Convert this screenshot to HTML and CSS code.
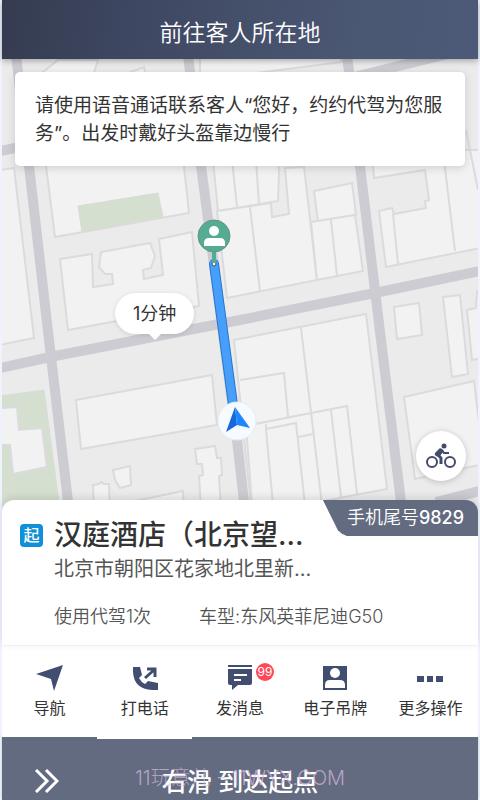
FILE: index.html
```
<!DOCTYPE html>
<html lang="zh-CN">
<head>
    <meta charset="UTF-8">
    <meta name="viewport" content="width=device-width, initial-scale=1.0">
    <title>前往客人所在地</title>
    <link rel="stylesheet" href="styles.css">
</head>
<body>

    <header class="header">
        <h1>前往客人所在地</h1>
    </header>

    <main class="map">
        <svg class="map-bg" viewBox="2 59 476 451" preserveAspectRatio="xMidYMid slice" aria-hidden="true">
            <!-- blocks -->
            <g class="block">
                <path d="M38 76L58 60H98L93 76Z"/>
                <path d="M120 76L144 67L146 76Z"/>
                <path d="M200 55H340L342 62L200 80Z"/>
                <path d="M0 170L14 168L34 338L0 345Z"/>
                <path d="M45 158L55 237L189 213L183 158Z"/>
                <path d="M60 259L92 254L93 287L113 284L112 274L105 274L99 267L101 252L150 243L155 256L151 268L143 270L144 279L163 275L159 239L192 232L199 306L68 330Z"/>
                <path d="M212 150L218 211L278 201L279 175L278 150Z"/>
                <path d="M217 211L271 203L272 217L289 214L285 168L304 167L317 280L227 298Z"/>
                <path d="M314 191L352 183L356 215L318 222Z"/>
                <path d="M311 222L355 215L363 271L317 280Z"/>
                <path d="M372 150L374 178L425 170L429 200L425 201L426 208L394 214L392 208L379 211L386 267L480 248V150Z"/>
                <path d="M394 307L419 303L422 335L397 339Z"/>
                <path d="M443 297L460 295L468 374L452 377Z"/>
                <path d="M482 288L477 291L476 308L467 310L472 360L482 358Z"/>
                <path d="M404 397L474 381L484 464L415 479Z"/>
                <path d="M234 340L366 314L387 489L355 495L252 515Z"/>
                <path d="M76 400L212 375L217 425L81 449Z"/>
                <path d="M113 470L130 466L131 485L120 488L115 480Z"/>
                <path d="M93 485L99 484L101 482L104 484L109 484L110 510H94Z"/>
                <path d="M195 449L215 446L217 458L221 458L222 475L219 476L221 510H201L199 476L203 475L202 464L197 464Z"/>
                <path d="M130 502L183 491L184 510H130Z"/>
            </g>
            <!-- parks -->
            <path class="park" d="M78 206L158 193L163 217L82 232Z"/>
            <path class="park" d="M0 396L44 390L60 510H0Z"/>
            <path class="block" d="M0 408L17 407L19 430L42 428L47 467L13 474L10 445H0Z"/>
            <!-- lot borders -->
            <path class="lot" d="M232 160L237 207M256 160L259 204M250 207L260 291M331 220L337 276M393 214L398 264M444 160L455 251M466 130L478 190M301 328L311 412M240 380L284 373L288 417M255 424L347 406L357 494M266 424V429L296 423L305 505M266 429L273 505M311 412L322 505M331 410L341 497M298 437L313 434M246 426L252 505"/>
            <!-- roads -->
            <g class="road">
                <path d="M16 55L29 166L49 340L69 510"/>
                <path d="M188 55L201 166L237 440L245 510"/>
                <path d="M347 55L360 166L381 340L402 510"/>
                <path d="M0 368L50 357L240 320L375 293L480 271"/>
                <path d="M0 151L40 143M350 78L480 46M436 502L480 491"/>
            </g>
            <!-- route -->
            <path class="route-edge" d="M214 264L234 412"/>
            <path class="route" d="M214 264L234 412"/>
            <!-- pick-up point -->
            <circle cx="214" cy="264" r="2" fill="#fff" stroke="#444c55"/>
            <path d="M214 250V263" stroke="#4fae93" stroke-width="4"/>
            <circle cx="214" cy="236" r="16" fill="#54ad93" stroke="#6b8d83" stroke-width="1"/>
            <circle cx="214" cy="231" r="5" fill="#fff"/>
            <path d="M204 246V243Q204 238 209 238H220Q225 238 225 243V246Z" fill="#fff"/>
            <!-- driver -->
            <circle cx="237" cy="421" r="19" fill="#f7fbff" stroke="#e5edf3"/>
            <path d="M235 407L226 432L237 425Z" fill="#1469dc"/>
            <path d="M235 407L250 428L237 425Z" fill="#1e86ff"/>
        </svg>

        <p class="notice">请使用语音通话联系客人“您好，约约代驾为您服务”。出发时戴好头盔靠边慢行</p>

        <div class="eta">1分钟</div>

        <button class="bike" type="button" aria-label="骑行">
            <svg width="30" height="26" viewBox="0 0 30 26" fill="none" stroke="#424b69">
                <circle cx="6" cy="19" r="5" stroke-width="2"/>
                <circle cx="24" cy="19" r="5" stroke-width="2"/>
                <circle cx="18" cy="3" r="2.5" fill="#424b69" stroke="none"/>
                <path d="M11 11L15 15V21" stroke-width="3" stroke-linejoin="round"/>
                <path d="M15 6L18 10H23" stroke-width="2"/>
                <path d="M14 5L9 10Q8 12 10 13L13 14L18 8Z" fill="#424b69" stroke="none"/>
            </svg>
        </button>
    </main>

    <section class="order">
        <div class="phone-tail">手机尾号<b>9829</b></div>
        <div class="place">
            <span class="start">起</span>
            <h2>汉庭酒店（北京望...</h2>
        </div>
        <p class="address">北京市朝阳区花家地北里新...</p>
        <div class="meta">
            <span>使用代驾1次</span>
            <span>车型:东风英菲尼迪G50</span>
        </div>
    </section>

    <nav class="actions">
        <button type="button">
            <svg width="28" height="28" viewBox="0 0 28 28" fill="#424e70">
                <path d="M27 1L18 27L15 15L0 10Z"/>
            </svg>
            导航
        </button>
        <button type="button" class="active">
            <svg width="28" height="28" viewBox="0 0 28 28">
                <path d="M2 3H9L11 11L8 14Q10 18 14 20L17 17L27 19V26H21Q3 25 2 8Z" fill="#424e70"/>
                <path d="M14 14L23 6M16 5H24V13" fill="none" stroke="#424e70" stroke-width="3"/>
            </svg>
            打电话
        </button>
        <button type="button">
            <svg width="28" height="28" viewBox="0 0 28 28">
                <path d="M2 1H26V3H2ZM2 5H26V19Q26 21 24 21H12L6 26V21H4Q2 21 2 19Z" fill="#424e70"/>
                <path d="M8 11H21M8 16H15" stroke="#fff" stroke-width="2"/>
            </svg>
            发消息
            <span class="badge">99</span>
        </button>
        <button type="button">
            <svg width="28" height="28" viewBox="0 0 28 28">
                <path d="M2 2H26V26H2Z" fill="#424e70"/>
                <circle cx="14" cy="9" r="5" fill="#fff"/>
                <path d="M4 24V21Q4 16 9 16H19Q24 16 24 21V24Z" fill="#fff"/>
            </svg>
            电子吊牌
        </button>
        <button type="button">
            <svg width="28" height="28" viewBox="0 0 28 28" fill="#424e70">
                <path d="M1 12H8V18H1ZM11 12H17V18H11ZM20 12H27V18H20Z"/>
            </svg>
            更多操作
        </button>
    </nav>

    <footer class="slide">
        <button type="button">
            <svg class="arrows" width="24" height="24" viewBox="0 0 24 24" fill="none" stroke="#fff" stroke-width="3">
                <path d="M1 1L12 12L1 23M11 1L22 12L11 23"/>
            </svg>
            右滑 到达起点
        </button>
        <span class="watermark">11玩意儿 - 11WYX.COM</span>
    </footer>

</body>
</html>
```
FILE: styles.css
```
* {
    padding: 0;
    margin: 0;
    box-sizing: border-box;
}

body {
    display: flex;
    flex-direction: column;
    min-height: 100vh;
    padding: 0 2px;
    background-color: #eef3fc;
    color: #333;
    font-family: Inter, "Noto Sans CJK SC", sans-serif;
}

button {
    border: none;
    background: none;
    color: inherit;
    font-family: inherit;
    cursor: pointer;
}

/* Header */
.header {
    position: relative;
    z-index: 2;
    padding: 17px 0 10px;
    background: linear-gradient(100deg, #353c50, #3f4863 30%, #4b5873 75%, #4c5978);
    color: #fff;
    text-align: center;
    box-shadow: 0 2px 6px rgba(0, 0, 0, 0.3);
}

.header h1 {
    font-size: 23px;
    font-weight: 350;
    line-height: 32px;
}

/* Map */
.map {
    position: relative;
    flex: 1;
    min-height: 400px;
    padding: 13px;
    overflow: hidden;
    background-color: #ebebeb;
}

.map-bg {
    position: absolute;
    top: 0;
    left: 0;
    width: 100%;
    height: 100%;
}

.block {
    fill: #f2f2f2;
    stroke: #dbdbdd;
    stroke-width: 2;
}

.park {
    fill: #d5dfcf;
    stroke: #d8dcd5;
}

.lot {
    fill: none;
    stroke: #dbdbdd;
    stroke-width: 2;
}

.road {
    fill: none;
    stroke: #cdccd2;
    stroke-width: 10;
}

.route-edge {
    stroke: #2a77cf;
    stroke-width: 10;
    stroke-linecap: round;
}

.route {
    stroke: #469ffa;
    stroke-width: 8;
    stroke-linecap: round;
}

.notice {
    position: relative;
    padding: 20px 16px 18px 20px;
    border-radius: 5px;
    background-color: #fff;
    font-size: 19px;
    font-weight: 400;
    line-height: 28px;
    box-shadow: 0 2px 8px rgba(0, 0, 0, 0.15);
}

.eta {
    position: absolute;
    top: 234px;
    left: 113px;
    padding: 0 18px;
    border-radius: 21px;
    background-color: #fff;
    font-size: 18px;
    line-height: 41px;
    box-shadow: 0 1px 5px rgba(0, 0, 0, 0.12);
}

.eta::after {
    content: "";
    position: absolute;
    top: 100%;
    left: 50%;
    margin-left: -6px;
    border: 6px solid transparent;
    border-top-color: #fff;
    border-bottom: none;
}

.bike {
    position: absolute;
    right: 12px;
    bottom: 29px;
    display: flex;
    justify-content: center;
    align-items: center;
    width: 50px;
    height: 50px;
    border-radius: 50%;
    background-color: #fff;
    box-shadow: 0 1px 6px rgba(0, 0, 0, 0.2);
}

/* Order card */
.order {
    position: relative;
    margin-top: -10px;
    padding: 16px 18px;
    border-radius: 12px 12px 0 0;
    background-color: #fff;
    box-shadow: 0 -2px 8px rgba(0, 0, 0, 0.12);
}

.phone-tail {
    position: absolute;
    top: 0;
    right: 0;
    padding: 0 14px 0 24px;
    border-radius: 0 12px 0 0;
    background-color: #636b80;
    clip-path: polygon(0 0, 100% 0, 100% 100%, 24px 100%, 19px 94%, 15px 84%);
    color: #fff;
    font-size: 18px;
    font-weight: 350;
    line-height: 36px;
}

.phone-tail b {
    font-weight: 500;
}

.place {
    display: flex;
    align-items: center;
    gap: 11px;
}

.start {
    width: 23px;
    border-radius: 4px;
    background-color: #0f90d8;
    color: #fff;
    font-size: 16px;
    font-weight: 500;
    line-height: 23px;
    text-align: center;
}

.place h2 {
    font-size: 28px;
    font-weight: 500;
    line-height: 38px;
}

.address {
    padding-left: 34px;
    color: #555;
    font-size: 20px;
    font-weight: 400;
    line-height: 30px;
}

.meta {
    display: flex;
    gap: 48px;
    margin-top: 20px;
    padding-left: 34px;
    color: #555;
    font-size: 18px;
    font-weight: 350;
    line-height: 25px;
}

/* Action buttons */
.actions {
    display: flex;
    border-top: 1px solid #f8f8f8;
    background-color: #fff;
}

.actions button {
    position: relative;
    flex: 1;
    display: flex;
    flex-direction: column;
    align-items: center;
    gap: 4px;
    padding: 18px 0 17px;
    font-size: 16px;
    line-height: 24px;
    white-space: nowrap;
}

.actions .active::after {
    content: "";
    position: absolute;
    top: 100%;
    width: 100%;
    height: 2px;
    background-color: #fff;
}

.badge {
    position: absolute;
    top: 17px;
    left: 50%;
    width: 18px;
    margin-left: 16px;
    border-radius: 50%;
    background-color: #ff4858;
    color: #fff;
    font-size: 12px;
    line-height: 18px;
    text-align: center;
}

/* Slide bar */
.slide {
    position: relative;
    z-index: -1;
    background-color: #636b80;
    color: #fff;
    box-shadow: 0 -1px 3px rgba(0, 0, 0, 0.2);
}

.slide button {
    width: 100%;
    padding: 27px 0 0;
    font-size: 25px;
    font-weight: 500;
    line-height: 36px;
}

.arrows {
    position: absolute;
    left: 33px;
    bottom: 7px;
}

.watermark {
    position: absolute;
    right: 0;
    bottom: 8px;
    left: 0;
    color: rgba(222, 190, 224, 0.7);
    font-size: 20px;
    font-weight: 300;
    line-height: 28px;
    text-align: center;
    pointer-events: none;
}
```
